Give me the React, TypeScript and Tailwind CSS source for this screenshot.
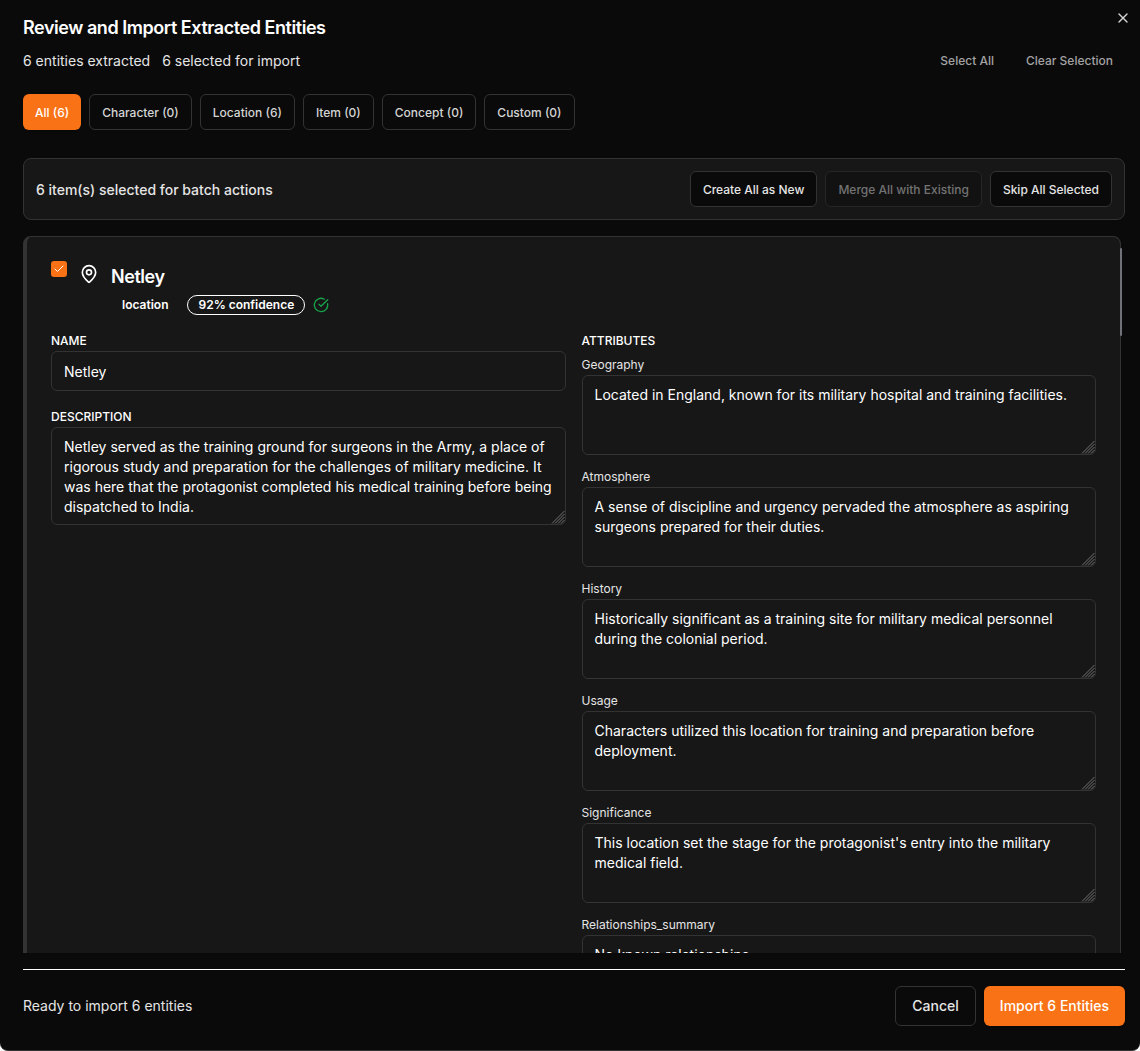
import { Check, CircleCheckBig, MapPin, X } from 'lucide-react';

const tabs = ['All (6)', 'Character (0)', 'Location (6)', 'Item (0)', 'Concept (0)', 'Custom (0)'];

const attributes = [
  { label: 'Geography', text: 'Located in England, known for its military hospital and training facilities.' },
  { label: 'Atmosphere', text: 'A sense of discipline and urgency pervaded the atmosphere as aspiring surgeons prepared for their duties.' },
  { label: 'History', text: 'Historically significant as a training site for military medical personnel during the colonial period.' },
  { label: 'Usage', text: 'Characters utilized this location for training and preparation before deployment.' },
  { label: 'Significance', text: "This location set the stage for the protagonist's entry into the military medical field." },
  { label: 'Relationships_summary', text: 'No known relationships.' },
];

const description =
  'Netley served as the training ground for surgeons in the Army, a place of rigorous study and preparation for the challenges of military medicine. It was here that the protagonist completed his medical training before being dispatched to India.';

const fieldClass =
  'block w-full resize-none overflow-hidden rounded-md border border-[#333333] bg-[#171717] px-3 pb-2 pt-[9px] text-sm leading-5 text-white outline-none';

function Field({ value, height }: { value: string; height: string }) {
  return (
    <div className="relative mt-[2px]">
      <textarea readOnly value={value} className={`${height} ${fieldClass}`} />
      <svg className="absolute bottom-[1px] right-[1px] h-[14px] w-[14px]" viewBox="0 0 14 14" stroke="#737373" strokeWidth="1">
        <path d="M13.5 1 1 13.5M13.5 4 4 13.5M13.5 7 7 13.5M13.5 10 10 13.5" />
      </svg>
    </div>
  );
}

export default function App() {
  return (
    <div className="relative flex h-[1051px] w-[1140px] flex-col overflow-hidden rounded-b-lg border-b border-[#333333] bg-[#0a0a0a] pl-[23px] pr-[15px] font-['Inter',sans-serif] text-white [color-scheme:dark]">
      <button className="absolute right-[9px] top-[10px] text-[#d4d4d4]">
        <X className="h-4 w-4" />
      </button>

      <h1 className="mt-[14px] text-lg font-semibold leading-7 tracking-tight">Review and Import Extracted Entities</h1>

      <div className="mt-[9px] flex items-center justify-between">
        <div className="flex gap-3 text-sm leading-5 text-[#e5e5e5]">
          <span>6 entities extracted</span>
          <span>6 selected for import</span>
        </div>
        <div className="flex gap-8 pr-3 text-xs font-medium text-[#a3a3a3]">
          <button>Select All</button>
          <button>Clear Selection</button>
        </div>
      </div>

      <div className="mt-[23px] flex gap-2">
        {tabs.map((tab, i) => (
          <button
            key={tab}
            className={
              i === 0
                ? 'h-9 rounded-md bg-[#f97316] px-3 pt-[2px] text-xs font-medium text-white shadow-sm'
                : 'h-9 rounded-md border border-[#333333] px-3 pt-[2px] text-xs font-medium text-[#d4d4d4]'
            }
          >
            {tab}
          </button>
        ))}
      </div>

      <div className="mt-7 flex h-[62px] shrink-0 items-center justify-between rounded-lg border border-[#333333] bg-[#171717] pl-3 pr-3">
        <span className="pt-[2px] text-sm font-medium text-[#e5e5e5]">6 item(s) selected for batch actions</span>
        <div className="flex gap-2">
          <button className="h-9 rounded-md border border-[#333333] bg-[#0a0a0a] px-3 pt-[2px] text-xs font-medium text-[#e5e5e5]">Create All as New</button>
          <button className="h-9 rounded-md border border-[#262626] bg-[#121212] px-3 pt-[2px] text-xs font-medium text-[#737373]">Merge All with Existing</button>
          <button className="h-9 rounded-md border border-[#333333] bg-[#0a0a0a] px-3 pt-[2px] text-xs font-medium text-[#e5e5e5]">Skip All Selected</button>
        </div>
      </div>

      <div className="relative mt-4 h-[717px] shrink-0 overflow-hidden">
        <div className="mr-1 rounded-t-lg border border-l-4 border-[#333333] bg-[#171717] px-6 pt-6">
          <div className="flex items-start">
            <div className="flex h-4 w-4 items-center justify-center rounded-[3px] bg-[#f97316]">
              <Check className="h-3 w-3 text-white" />
            </div>
            <MapPin className="ml-3 mt-[3px] h-5 w-5 text-white" />
            <h2 className="ml-3 text-lg font-semibold leading-[32px] tracking-tight">Netley</h2>
          </div>
          <div className="mt-[2px] flex items-center pl-[71px]">
            <span className="text-xs font-semibold">location</span>
            <span className="ml-[19px] rounded-full border border-white px-[10px] text-xs font-semibold leading-[18px]">92% confidence</span>
            <CircleCheckBig className="ml-2 h-4 w-4 text-[#16a34a]" />
          </div>

          <div className="mt-[18px] grid grid-cols-2 gap-4">
            <div>
              <div className="text-xs font-medium uppercase leading-4">Name</div>
              <input readOnly value="Netley" className={`mt-[2px] h-10 ${fieldClass}`} />
              <div className="mt-[18px] text-xs font-medium uppercase leading-4">Description</div>
              <Field value={description} height="h-[98px]" />
            </div>
            <div>
              <div className="text-xs font-medium uppercase leading-4">Attributes</div>
              {attributes.map((attr) => (
                <div key={attr.label} className="mb-[14px] mt-2">
                  <div className="text-xs leading-4 text-[#e5e5e5]">{attr.label}</div>
                  <Field value={attr.text} height="h-20" />
                </div>
              ))}
            </div>
          </div>
        </div>
        <span className="absolute right-[3px] top-3 h-[88px] w-[2px] rounded-full bg-[#71717a]" />
      </div>

      <div className="mt-4 h-px shrink-0 bg-white" />

      <div className="mt-4 flex items-center justify-between">
        <span className="text-sm text-[#e5e5e5]">Ready to import 6 entities</span>
        <div className="flex gap-2">
          <button className="h-10 w-[81px] rounded-md border border-[#333333] text-sm font-medium text-[#e5e5e5]">Cancel</button>
          <button className="h-10 w-[141px] rounded-md bg-[#f97316] text-sm font-medium text-white shadow-sm">Import 6 Entities</button>
        </div>
      </div>
    </div>
  );
}
